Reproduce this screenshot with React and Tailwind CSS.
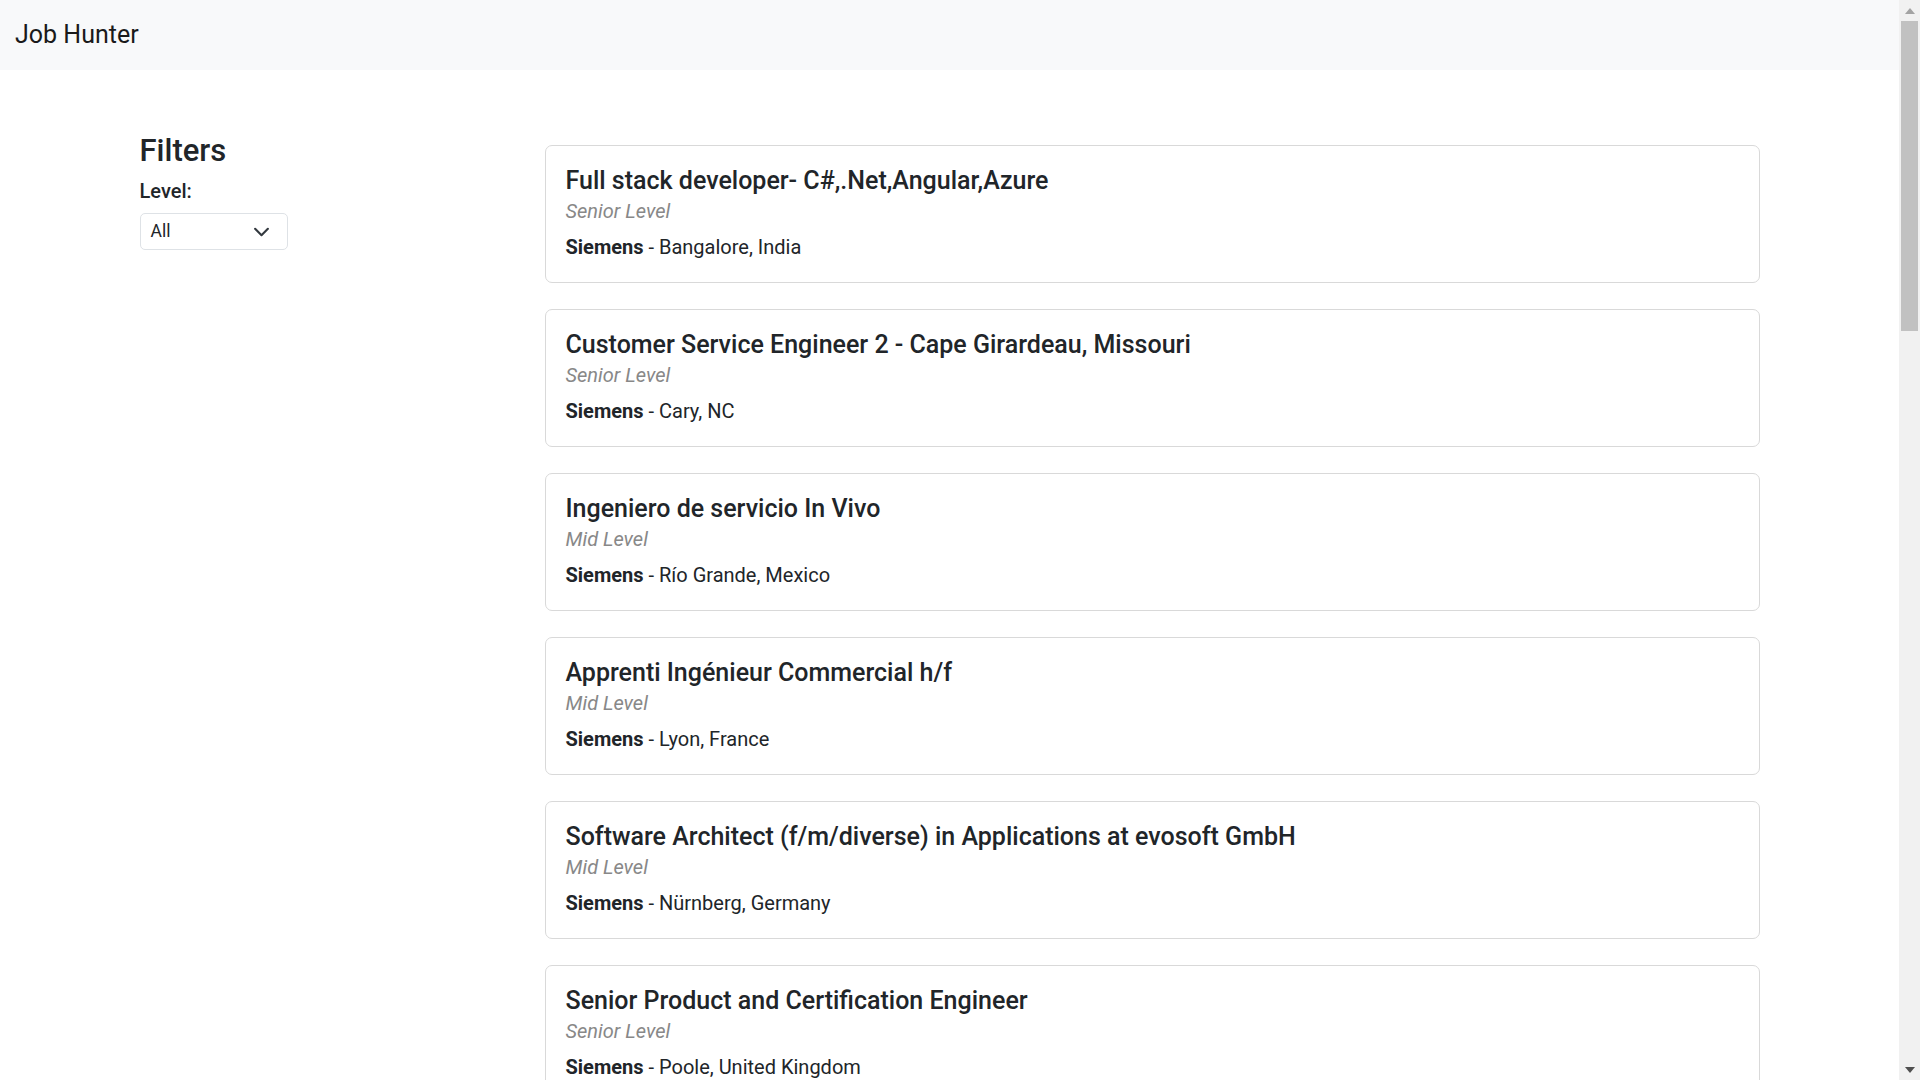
import React from "react";

const jobs = [
  { title: "Full stack developer- C#,.Net,Angular,Azure", level: "Senior Level", company: "Siemens", location: "Bangalore, India" },
  { title: "Customer Service Engineer 2 - Cape Girardeau, Missouri", level: "Senior Level", company: "Siemens", location: "Cary, NC" },
  { title: "Ingeniero de servicio In Vivo", level: "Mid Level", company: "Siemens", location: "Río Grande, Mexico" },
  { title: "Apprenti Ingénieur Commercial h/f", level: "Mid Level", company: "Siemens", location: "Lyon, France" },
  { title: "Software Architect (f/m/diverse) in Applications at evosoft GmbH", level: "Mid Level", company: "Siemens", location: "Nürnberg, Germany" },
  { title: "Senior Product and Certification Engineer", level: "Senior Level", company: "Siemens", location: "Poole, United Kingdom" },
  { title: "Data Engineer (f/m/d)", level: "Mid Level", company: "Siemens", location: "Munich, Germany" },
  { title: "Project Manager - Smart Infrastructure", level: "Senior Level", company: "Siemens", location: "Zug, Switzerland" },
  { title: "Field Service Technician", level: "Mid Level", company: "Siemens", location: "Houston, TX" },
  { title: "Cloud DevOps Engineer", level: "Senior Level", company: "Siemens", location: "Pune, India" },
  { title: "Werkstudent Softwareentwicklung (w/m/d)", level: "Entry Level", company: "Siemens", location: "Erlangen, Germany" },
  { title: "Electrical Design Engineer", level: "Mid Level", company: "Siemens", location: "Manchester, United Kingdom" },
  { title: "Sales Specialist - Building Technologies", level: "Mid Level", company: "Siemens", location: "Madrid, Spain" },
  { title: "Quality Assurance Engineer", level: "Mid Level", company: "Siemens", location: "Prague, Czech Republic" },
  { title: "Embedded Software Developer C/C++", level: "Senior Level", company: "Siemens", location: "Chennai, India" },
  { title: "Ingénieur Automatisme", level: "Mid Level", company: "Siemens", location: "Paris, France" },
  { title: "Service Engineer - Healthineers", level: "Mid Level", company: "Siemens", location: "São Paulo, Brazil" },
  { title: "Frontend Developer (React)", level: "Mid Level", company: "Siemens", location: "Berlin, Germany" },
  { title: "Cybersecurity Analyst", level: "Senior Level", company: "Siemens", location: "Atlanta, GA" },
  { title: "Product Owner - Digital Industries", level: "Senior Level", company: "Siemens", location: "Vienna, Austria" },
  { title: "Supply Chain Planner", level: "Mid Level", company: "Siemens", location: "Singapore" },
];

function JobCard({ job }) {
  return (
    <div className="border border-[#d9d9d9] rounded-[7px] bg-white px-[20px] py-[20px]">
      <h5 className="text-[25px] leading-[30px] font-medium text-[#212529]">{job.title}</h5>
      <div className="text-[20px] leading-[30px] italic text-[#888888]">{job.level}</div>
      <p className="mt-[6px] text-[20px] leading-[30px] text-[#212529]">
        <span className="font-bold">{job.company}</span> - {job.location}
      </p>
    </div>
  );
}

function ScrollbarDecor() {
  return (
    <div aria-hidden="true" className="fixed right-0 top-0 w-[21px] h-screen bg-[#f1f1f1] flex flex-col items-center">
      <div className="h-[21px] w-full flex items-center justify-center">
        <svg width="10" height="6" viewBox="0 0 10 6"><path d="M0 6L5 0L10 6Z" fill="#a3a3a3" /></svg>
      </div>
      <div className="w-[17px] h-[310px] bg-[#c1c1c1]" />
      <div className="flex-1" />
      <div className="h-[21px] w-full flex items-center justify-center">
        <svg width="10" height="6" viewBox="0 0 10 6"><path d="M0 0L10 0L5 6Z" fill="#505050" /></svg>
      </div>
    </div>
  );
}

export default function App() {
  return (
    <div className="bg-white text-[#212529] pr-[21px]" style={{ fontFamily: "Roboto, 'Noto Sans', sans-serif" }}>
      <nav className="h-[70px] bg-[#f8f9fa] flex items-center px-[15px]">
        <span className="text-[25px] text-[#1a1a1a]">Job Hunter</span>
      </nav>
      <div className="w-[1620px] mx-auto flex pb-[60px]">
        <aside className="w-[405px] shrink-0 pt-[62px]">
          <h2 className="text-[31px] leading-[37px] font-medium mb-[7px]">Filters</h2>
          <div className="text-[20px] leading-[30px] font-medium mb-[7px]">Level:</div>
          <div className="relative w-[148px] h-[37px] border border-[#dee2e6] rounded-[5px] bg-white flex items-center pl-[10px] text-[17.5px]">
            <span>All</span>
            <svg className="absolute right-[17px] top-1/2 -translate-y-1/2" width="17" height="17" viewBox="0 0 16 16" fill="none">
              <path d="M2 5l6 6 6-6" stroke="#343a40" strokeWidth="2" strokeLinecap="round" strokeLinejoin="round" />
            </svg>
          </div>
        </aside>
        <main className="flex-1 pt-[75px] flex flex-col gap-[26px]">
          {jobs.map((job, i) => (
            <JobCard key={i} job={job} />
          ))}
        </main>
      </div>
      <ScrollbarDecor />
    </div>
  );
}
